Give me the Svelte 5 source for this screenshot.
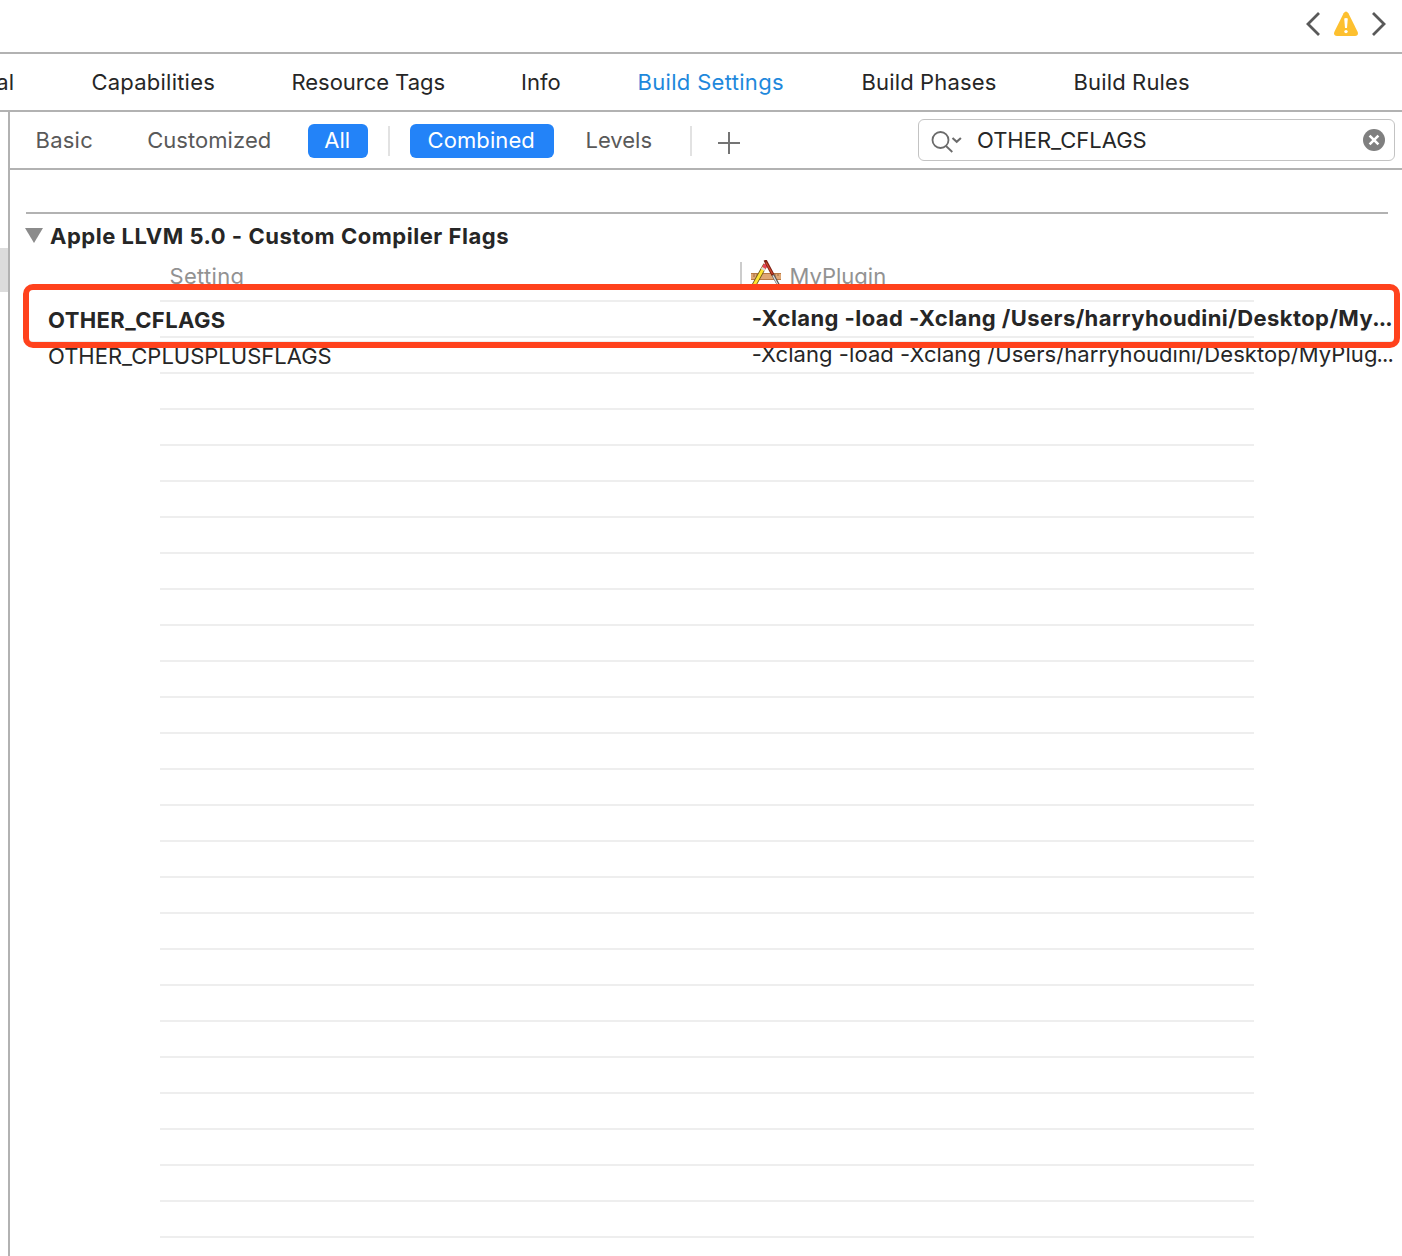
<script>
  const tabs = [
    { label: 'General', cls: 'clipped' },
    { label: 'Capabilities', cls: 'capabilities' },
    { label: 'Resource Tags', cls: 'resources' },
    { label: 'Info', cls: 'info' },
    { label: 'Build Settings', cls: 'settings active' },
    { label: 'Build Phases', cls: 'phases' },
    { label: 'Build Rules', cls: 'rules' }
  ];
  const emptyRows = Array.from({ length: 24 });
</script>

<div class="window">
  <header class="jumpbar">
    <svg class="nav" width="20" height="28" viewBox="0 0 20 28"><path d="M16 3 5 14 16 25" /></svg>
    <svg class="warn" width="26" height="26" viewBox="0 0 26 26">
      <path class="tri" d="M10.6 2.2Q13-1 15.4 2.2L24.7 21Q25.8 25 22 25H4Q.2 25 1.3 21Z" />
      <path class="mark" d="M11.2 7.5Q13 6.3 14.8 7.5L14 17H12Z" />
      <circle class="mark" cx="13" cy="20.6" r="1.7" />
    </svg>
    <svg class="nav" width="20" height="28" viewBox="0 0 20 28"><path d="M4 3 15 14 4 25" /></svg>
  </header>

  <nav class="tabs">
    {#each tabs as tab}
      <span class="tab {tab.cls}"><span>{tab.label}</span></span>
    {/each}
  </nav>

  <div class="body">
    <aside class="gutter"><div class="thumb"></div></aside>
    <main>
      <div class="filters">
        <span class="basic">Basic</span>
        <span class="customized">Customized</span>
        <span class="pill all">All</span>
        <i class="sep"></i>
        <span class="pill combined">Combined</span>
        <span class="levels">Levels</span>
        <i class="sep"></i>
        <svg class="plus" width="22" height="22" viewBox="0 0 22 22"><path d="M11 0V22M0 11H22" /></svg>
        <div class="search">
          <svg class="glass" width="32" height="24" viewBox="0 0 32 24">
            <circle cx="9.5" cy="10" r="8" />
            <path d="M15 16 21.3 22" />
            <path d="M21.5 8 25.7 11.8 29.9 8" stroke-width="2.1" />
          </svg>
          <span class="query">OTHER_CFLAGS</span>
          <svg width="22" height="22" viewBox="0 0 22 22">
            <circle cx="11" cy="11" r="11" fill="#7f7f7f" />
            <path d="M6.6 6.6 15.4 15.4M15.4 6.6 6.6 15.4" stroke="#fff" stroke-width="2.6" />
          </svg>
        </div>
      </div>

      <section>
        <div class="group">
          <svg width="18" height="15" viewBox="0 0 18 15"><path d="M0 0H18L9 15Z" fill="#8b8b8b" /></svg>
          <h2>Apple LLVM 5.0 - Custom Compiler Flags</h2>
        </div>
        <div class="columns">
          <span class="setting">Setting</span>
          <div class="target">
            <svg width="30" height="28" viewBox="0 0 30 28">
              <rect x="0" y="13" width="30" height="7" fill="#dfa775" />
              <path d="M0 13.5H30M0 19.5H30" stroke="#b87943" />
              <path d="M3 14v3M6 14v2M9 14v3M21 14v2M24 14v3M27 14v2" stroke="#8f5b30" stroke-width=".8" />
              <path d="M14.5 4.5 2 27" stroke="#6b5417" stroke-width="4.6" />
              <path d="M14 5.5 2 27" stroke="#ffe332" stroke-width="3" />
              <path d="M14.8 4.5 13 8" stroke="#e8445a" stroke-width="4" />
              <path d="M12.8 8 11.8 10" stroke="#ddd" stroke-width="4" />
              <path d="M14 0 22 15" stroke="#7c2014" stroke-width="3.2" />
              <path d="M15 2.5 21.5 14" stroke="#d4472c" stroke-width="1.3" />
              <path d="M22 15 28 26" stroke="#555" stroke-width="2.8" />
              <path d="M22 15.5 27.5 26" stroke="#ddd" stroke-width="1.3" />
            </svg>
            <span class="plugin">MyPlugin</span>
          </div>
        </div>
        <div class="table">
          <div class="row strong">
            <span class="key">OTHER_CFLAGS</span>
            <span class="value">-Xclang -load -Xclang /Users/harryhoudini/Desktop/My<span class="dots">...</span></span>
          </div>
          <div class="row">
            <span class="key">OTHER_CPLUSPLUSFLAGS</span>
            <span class="value">-Xclang -load -Xclang /Users/harryhoudini/Desktop/MyPlug<span class="dots">...</span></span>
          </div>
          {#each emptyRows as _}
            <div class="row"></div>
          {/each}
          <div class="row"></div>
          <div class="highlight"></div>
        </div>
      </section>
    </main>
  </div>
</div>

<style>
  :global(body) { margin: 0; background: #fff; overflow: hidden; }
  .window {
    width: 1402px; height: 1256px; overflow: hidden; display: flex; flex-direction: column;
    background: #fff; color: #262626; font: 22px/28px Inter, sans-serif; white-space: nowrap;
  }
  svg { display: block; flex: none; fill: none; }
  .jumpbar {
    box-sizing: border-box; height: 54px; flex: none; border-bottom: 2px solid #b2b2b2;
    display: flex; justify-content: flex-end; align-items: flex-start; padding: 10px 13px 0 0;
  }
  .nav path { stroke: #595959; stroke-width: 2.8; }
  .warn { margin: 1px 10px 0; }
  .tri { fill: #fdc02f; }
  .mark { fill: #fff; }
  .tabs {
    box-sizing: border-box; height: 58px; flex: none; border-bottom: 2px solid #b2b2b2;
    display: grid; grid-template-columns: 91.5px 200px 229.5px 116.5px 224px 212px 1fr; padding-top: 14px;
  }
  .clipped { display: flex; justify-content: flex-end; width: 14px; overflow: hidden; }
  .capabilities { letter-spacing: .22px; }
  .resources { letter-spacing: -.04px; }
  .settings { letter-spacing: .32px; }
  .phases, .rules { letter-spacing: .15px; }
  .active { color: #1e88dc; }
  .body { flex: 1; display: flex; min-height: 0; }
  .gutter { width: 8px; flex: none; border-right: 2px solid #b2b2b2; padding-top: 136px; }
  .thumb { height: 44px; background: #dcdcdc; }
  main { flex: 1; min-width: 0; }
  .filters {
    box-sizing: border-box; height: 58px; border-bottom: 2px solid #b2b2b2; color: #595959;
    display: flex; align-items: center; padding: 0 7px 0 25.5px;
  }
  .basic { width: 111.7px; letter-spacing: .25px; }
  .customized { width: 160.8px; letter-spacing: .05px; }
  .pill {
    height: 34px; line-height: 33px; margin-top: 1px; border-radius: 6px; background: #2383f8;
    color: #fff; text-align: center; box-sizing: border-box; padding-right: 1.5px;
  }
  .all { width: 60px; }
  .combined { width: 144px; letter-spacing: .1px; }
  .levels { width: 104.5px; margin-left: 31.5px; }
  .sep { width: 2px; height: 30px; background: #e2e2e2; margin: 2px 0 0; }
  .all + .sep { margin: 2px 20px 0; }
  .plus { margin: 5px 0 0 26px; }
  .plus path { stroke: #747474; stroke-width: 2; }
  .search {
    box-sizing: border-box; width: 477px; height: 42px; margin-left: auto; border: 1.5px solid #c3c3c3; border-radius: 6px;
    display: flex; align-items: center; padding: 0 9px 0 12px; color: #262626;
  }
  .glass { stroke: #6b6b6b; stroke-width: 1.8; margin-top: 3px; }
  .query { flex: 1; margin-left: 14px; }
  section { padding: 42px 0 0 16px; }
  .group { border-top: 2px solid #b2b2b2; width: 1362px; height: 46px; display: flex; align-items: flex-start; }
  .group svg { margin: 14px 0 0 -1px; }
  h2 { margin: 8px 0 0 7px; font: 700 22px/28px Inter, sans-serif; letter-spacing: .52px; }
  .columns { height: 40px; display: flex; align-items: flex-start; color: #929292; }
  .setting { width: 571px; box-sizing: border-box; margin-left: 143px; padding: 2px 0 0 .5px; letter-spacing: .3px; }
  .target { border-left: 2px solid #ccc; display: flex; padding-left: 9px; height: 24px; margin-top: 2px; }
  .target svg { margin-top: -2px; }
  .plugin { margin-left: 8.5px; }
  .table { position: relative; }
  .row {
    box-sizing: border-box; height: 36px; display: flex; padding-left: 22px;
    background: linear-gradient(#eee, #eee) 134px 0 / 1094px 2px no-repeat;
  }
  .key { width: 703.7px; padding-top: 6px; }
  .value { padding-top: 4px; letter-spacing: .06px; }
  .strong { font-weight: 700; letter-spacing: .4px; }
  .strong .value { letter-spacing: .42px; }
  .value .dots { letter-spacing: -.8px; margin-left: -1px; }
  .highlight {
    position: absolute; left: -3px; top: -16px; width: 1377px; height: 64px;
    box-sizing: border-box; border: 6px solid #ff421d; border-radius: 10px;
    box-shadow: inset 0 -1px #eee;
  }
</style>
